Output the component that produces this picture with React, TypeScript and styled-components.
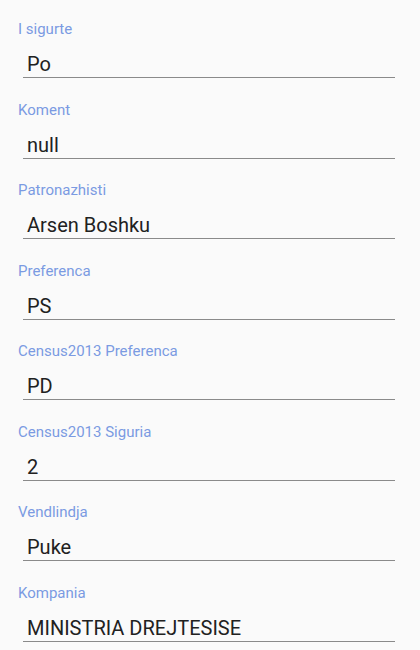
import React from 'react';
import styled, { createGlobalStyle } from 'styled-components';

const GlobalStyle = createGlobalStyle`
	html, body {
		margin: 0;
		padding: 0;
		background: #fafafa;
	}
	body {
		font-family: Roboto, "Noto Sans", sans-serif;
	}
`;

const Page = styled.div`
	width: 420px;
	min-height: 650px;
	background: #fafafa;
	overflow: hidden;
`;

const Field = styled.div`
	display: flex;
	flex-direction: column;
	padding: 19px 0 2.5px;
`;

const Label = styled.div`
	margin-left: 18px;
	font-size: 15px;
	line-height: 20px;
	color: #7b9ae2;
`;

const Value = styled.div`
	margin: 12px 25px 0 23px;
	padding-left: 4px;
	font-size: 20px;
	line-height: 26px;
	color: #212121;
	border-bottom: 1px solid #8a8a8a;
`;

type FieldData = {
	label: string;
	value: string;
};

const fields: FieldData[] = [
	{ label: 'I sigurte', value: 'Po' },
	{ label: 'Koment', value: 'null' },
	{ label: 'Patronazhisti', value: 'Arsen Boshku' },
	{ label: 'Preferenca', value: 'PS' },
	{ label: 'Census2013 Preferenca', value: 'PD' },
	{ label: 'Census2013 Siguria', value: '2' },
	{ label: 'Vendlindja', value: 'Puke' },
	{ label: 'Kompania', value: 'MINISTRIA DREJTESISE' },
];

const App = (): JSX.Element => {
	return (
		<Page>
			<GlobalStyle />
			{fields.map((f) => (
				<Field key={f.label}>
					<Label>{f.label}</Label>
					<Value>{f.value}</Value>
				</Field>
			))}
		</Page>
	);
};

export default App;
